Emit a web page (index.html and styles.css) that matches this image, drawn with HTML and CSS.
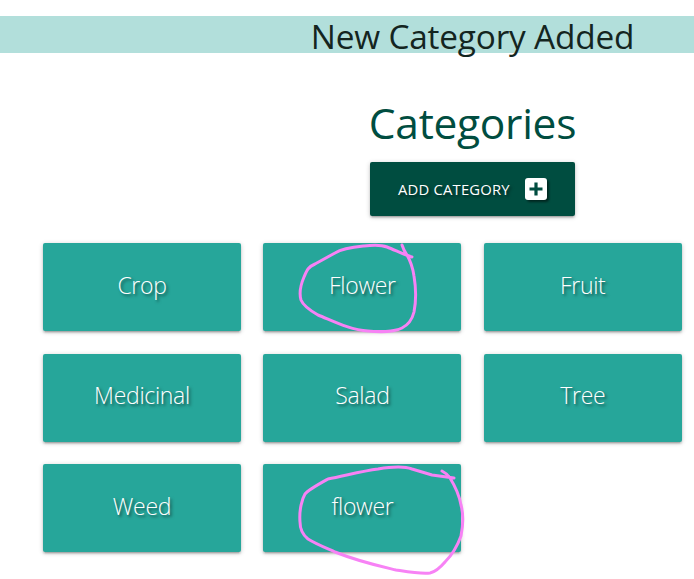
FILE: index.html
```html
<!DOCTYPE html>
<html lang="en">
<head>
<meta charset="utf-8">
<title>Categories</title>
<link rel="stylesheet" href="styles.css">
</head>
<body>
<main class="page">
  <h4 class="flash">New Category Added</h4>
  <header class="heading">
    <h3 class="title">Categories</h3>
    <a class="add-button"><span class="add-label">ADD CATEGORY</span>
      <svg class="plus" viewBox="0 0 22 22"><rect width="22" height="22" rx="3" fill="#fff"/><path d="M11 4.5v13M4.5 11h13" stroke="#004d40" stroke-width="3.2"/></svg>
    </a>
  </header>
  <section class="grid">
    <div class="card">Crop</div>
    <div class="card">Flower</div>
    <div class="card">Fruit</div>
    <div class="card">Medicinal</div>
    <div class="card">Salad</div>
    <div class="card">Tree</div>
    <div class="card">Weed</div>
    <div class="card">flower</div>
  </section>
</main>
<svg class="marks" viewBox="0 0 694 579">
  <path d="M402 245C404 251 405 252 407 255C411 262 413 269 414 276C416 288 416 302 414 312C412 320 408 325 402 328C394 332 378 332 368 331C350 330 333 321 318 315C311 311 303 305 301 300C299 293 301 284 304 277C307 270 308 267 315 264L335 253C343 248 354 247 364 246C372 245 382 245 387 247C395 250 404 255 412 257"/>
  <path d="M442 471C446 473 448 475 450 478C455 486 459 494 461 505C464 516 463 526 461 536C457 547 452 555 445 562C439 569 435 572 430 573C420 574 409 572 396 570C379 566 360 562 335 552C326 548 316 544 308 539C303 535 300 530 300 522C299 510 302 499 305 494C308 490 319 484 328 479C344 476 362 471 378 469C390 467 404 466 412 469L432 475L454 478"/>
</svg>
</body>
</html>
```
FILE: styles.css
```css
* { box-sizing: border-box; }
body {
  margin: 0;
  width: 694px;
  height: 579px;
  overflow: hidden;
  position: relative;
  background: #fff;
  font-family: "Open Sans", "Noto Sans", sans-serif;
}
.page { padding-top: 16px; }
.flash, .title { margin: 0; font-weight: 400; text-align: center; white-space: nowrap; }
.flash {
  height: 37px;
  padding-left: 251px;
  line-height: 41px;
  font-size: 33.4px;
  letter-spacing: -0.2px;
  color: #14251f;
  background: #b2dfdb;
}
.heading {
  display: flex;
  flex-direction: column;
  align-items: center;
  padding: 46px 0 0 251px;
}
.title {
  height: 63px;
  line-height: 47px;
  font-size: 42.5px;
  letter-spacing: -0.3px;
  color: #004d40;
}
.add-button {
  display: flex;
  align-items: center;
  justify-content: space-between;
  width: 205px;
  height: 54px;
  padding: 0 28px;
  border-radius: 2px;
  background: #004d40;
  color: #fff;
  font-size: 14.8px;
  letter-spacing: 0.2px;
  white-space: nowrap;
  text-shadow: 2px 2px 3px rgba(0, 0, 0, .5);
  box-shadow: 0 2px 2px rgba(0, 0, 0, .14), 0 3px 1px -2px rgba(0, 0, 0, .12), 0 1px 5px rgba(0, 0, 0, .2);
}
.plus { width: 22px; height: 22px; filter: drop-shadow(2px 2px 1px rgba(0, 0, 0, .5)); }
.grid {
  display: grid;
  grid-template-columns: repeat(3, 198px);
  grid-auto-rows: 88px;
  gap: 22.5px 22.4px;
  padding: 27px 0 0 43px;
}
.card {
  display: flex;
  align-items: center;
  justify-content: center;
  padding-bottom: 5px;
  border-radius: 2px;
  background: #26a69a;
  color: #fff;
  font-size: 23px;
  font-weight: 300;
  letter-spacing: -0.3px;
  white-space: nowrap;
  text-shadow: 2px 2px 3px rgba(0, 0, 0, .5);
  box-shadow: 0 2px 2px rgba(0, 0, 0, .14), 0 3px 1px -2px rgba(0, 0, 0, .12), 0 1px 5px rgba(0, 0, 0, .2);
}
.marks {
  position: absolute;
  inset: 0;
  width: 694px;
  height: 579px;
  fill: none;
  stroke: #f782f5;
  stroke-width: 3;
  stroke-linecap: round;
  stroke-linejoin: round;
  pointer-events: none;
}
```
